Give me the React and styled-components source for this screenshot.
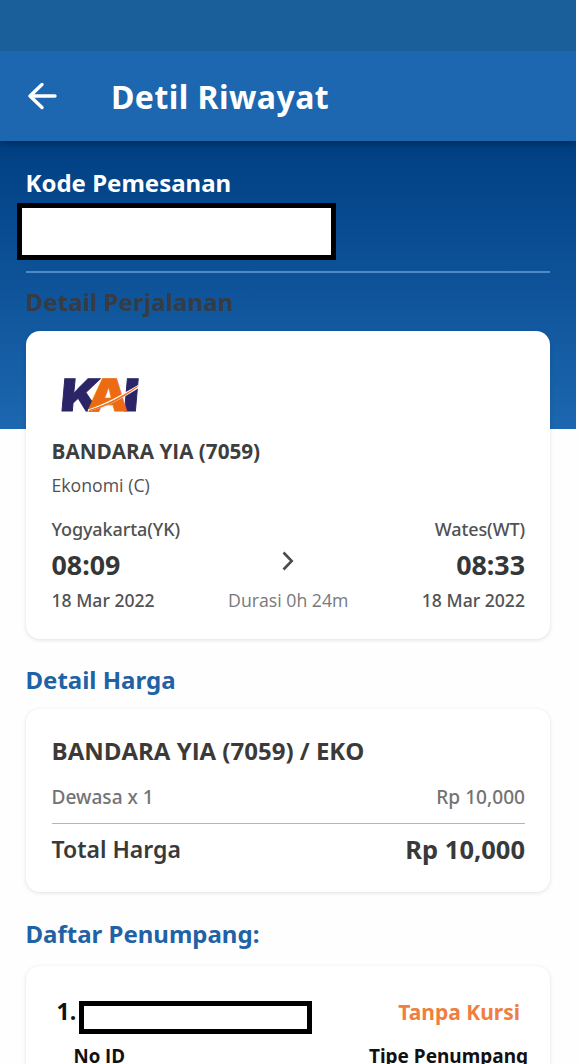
import React from 'react';
import styled, { createGlobalStyle } from 'styled-components';

const GlobalStyle = createGlobalStyle`
  * {
    box-sizing: border-box;
  }
  body {
    margin: 0;
    background: #fefefe;
    font-family: 'Noto Sans', sans-serif;
    overflow: hidden;
  }
`;

const Screen = styled.div`
  width: 576px;
  height: 1064px;
  overflow: hidden;
`;

const StatusBar = styled.div`
  height: 51px;
  background: #1a5e9a;
`;

const Header = styled.header`
  display: flex;
  align-items: center;
  position: relative;
  height: 90px;
  padding: 1px 27px 0;
  gap: 53px;
  background: #1c67b0;
  box-shadow: 0 2px 8px rgba(0, 0, 0, 0.35);
  clip-path: inset(0 0 -12px 0);
  svg {
    display: block;
    margin-bottom: 2px;
  }
`;

const Content = styled.main`
  padding: 24px 26px 0 25.5px;
  background: linear-gradient(#003f82, #1c67b0) no-repeat;
  background-size: 100% 288px;
`;

const Text = styled.div`
  font-family: ${({ plain }) => plain ? "'Open Sans', sans-serif" : 'inherit'};
  font-size: ${({ size }) => size || 18}px;
  font-weight: ${({ weight }) => weight || 500};
  line-height: ${({ line }) => line || 26}px;
  letter-spacing: ${({ spacing }) => spacing || 0}px;
  color: ${({ color }) => color || '#505254'};
  white-space: nowrap;
`;

const Title = styled.h1`
  margin: 0;
  font-size: 32px;
  font-weight: 700;
  line-height: 44px;
  letter-spacing: 0.45px;
  color: #fff;
`;

const Duration = styled(Text)`
  grid-row: 3;
  grid-column: 2;
`;

const SectionTitle = styled.h2`
  margin: ${({ top }) => top || 24}px 0 ${({ bottom }) => bottom || 11}px;
  font-size: 24px;
  font-weight: 700;
  line-height: 36px;
  letter-spacing: ${({ spacing }) => spacing || 0}px;
  color: ${({ color }) => color || '#1f62a5'};
`;

const CodeBox = styled.div`
  width: 319px;
  height: 57px;
  margin: 2px 0 11px -8.5px;
  border: 5px solid #000;
  background: #fff;
`;

const Divider = styled.div`
  height: 2px;
  background: #5089c6;
`;

const Card = styled.section`
  padding: ${({ pad }) => pad};
  border-radius: 14px;
  background: #fff;
  box-shadow: 0 1px 4px rgba(0, 0, 0, 0.12);
`;

const Logo = styled.svg`
  display: block;
  margin: -15px 0 12px -1px;
`;

const Trip = styled.div`
  display: grid;
  grid-template-columns: 1fr auto 1fr;
  grid-template-rows: 26px 36px 25px;
  row-gap: 5px;
  margin-top: 11px;
`;

const Stop = styled.div`
  display: grid;
  grid-row: 1 / 4;
  grid-template-rows: subgrid;
  justify-items: ${({ align }) => align || 'start'};
`;

const Arrow = styled.div`
  grid-row: 2;
  justify-self: center;
  padding-top: 4px;
  svg {
    display: block;
  }
`;

const Row = styled.div`
  display: flex;
  justify-content: space-between;
  align-items: center;
`;

const PriceRow = styled(Row)`
  padding: 15px 0 13px;
  border-bottom: 1px solid #b5b5b5;
`;

const TotalRow = styled(Row)`
  margin-top: 7px;
`;

const Passenger = styled.div`
  display: flex;
  align-items: flex-start;
  gap: 3px;
`;

const NameBox = styled.div`
  width: 233px;
  height: 33px;
  margin-top: 8px;
  border: 5px solid #000;
  background: #fff;
`;

const PassengerTop = styled(Row)`
  align-items: flex-start;
  padding: 0 5px;
`;

const PassengerInfo = styled(Row)`
  padding: 0 0 0 22px;
  margin: 9px -3px 0 0;
`;

const BackIcon = () => (
  <svg width="31" height="30" viewBox="0 0 31 30" fill="none" stroke="#fff" strokeWidth="3.4" strokeLinecap="round" strokeLinejoin="round">
    <path d="M28 15H4M15 3.5L3 15L15 26.5" />
  </svg>
);

const ChevronIcon = () => (
  <svg width="14" height="20" viewBox="0 0 14 20" fill="none" stroke="#4a4b4d" strokeWidth="2.6">
    <path d="M2.5 1.5L10.7 10L2.5 18.5" />
  </svg>
);

const KaiLogo = () => (
  <Logo width="110" height="62" viewBox="-10 -15 110 62">
    <g fontFamily="Inter, sans-serif" fontWeight="900" fontSize="44.5" strokeWidth="0.8" transform="translate(1 33) skewX(-5)">
      <text x="-2.5" y="0" fill="#2b2467" stroke="#2b2467" textLength="40" lengthAdjust="spacingAndGlyphs">K</text>
      <text x="60" y="0" fill="#2b2467" stroke="#2b2467" textLength="16" lengthAdjust="spacingAndGlyphs">I</text>
      <text x="24.5" y="0" fill="#ec6b12" stroke="#ec6b12" textLength="41" lengthAdjust="spacingAndGlyphs">A</text>
    </g>
    <path d="M27 31.5C44 26 60 17 77 7L77 10.5C62 20 46 29 27 33.5Z" fill="#fff" />
    <path d="M28 32.5C46 27 61 18.5 76.5 8.5C62 19.5 47 28.5 28 32.5Z" fill="#ec6b12" stroke="#ec6b12" strokeWidth="0.8" />
  </Logo>
);

const App = () => {
  return (
    <>
      <GlobalStyle />
      <Screen>
        <StatusBar />
        <Header>
          <BackIcon />
          <Title>Detil Riwayat</Title>
        </Header>
        <Content>
          <Text size={24} weight={700} line={36} color="#fff">Kode Pemesanan</Text>
          <CodeBox />
          <Divider />
          <SectionTitle top={11} spacing={0.12} color="#353c45">Detail Perjalanan</SectionTitle>

          <Card pad="47px 25px 26px 26px">
            <KaiLogo />
            <Text plain size={20.7} weight={700} line={28} color="#3c3e40">BANDARA YIA (7059)</Text>
            <Text plain size={17.7} weight={400} line={40}>Ekonomi (C)</Text>
            <Trip>
              <Stop>
                <Text spacing={-0.1}>Yogyakarta(YK)</Text>
                <Text size={26.8} weight={700} line={36} color="#343638">08:09</Text>
                <Text size={17.6} line={24}>18 Mar 2022</Text>
              </Stop>
              <Arrow>
                <ChevronIcon />
              </Arrow>
              <Duration plain size={17.7} weight={400} line={24} color="#77797b">Durasi 0h 24m</Duration>
              <Stop align="end">
                <Text spacing={-0.1}>Wates(WT)</Text>
                <Text size={26.8} weight={700} line={36} color="#343638">08:33</Text>
                <Text size={17.6} line={24}>18 Mar 2022</Text>
              </Stop>
            </Trip>
          </Card>

          <SectionTitle top={23}>Detail Harga</SectionTitle>
          <Card pad="24px 25px 25px 26px">
            <Text plain size={24} weight={700} line={36} color="#3c3a38">BANDARA YIA (7059) / EKO</Text>
            <PriceRow>
              <Text size={19.1} color="#737373">Dewasa x 1</Text>
              <Text size={19.1} color="#737373">Rp 10,000</Text>
            </PriceRow>
            <TotalRow>
              <Text size={23} weight={600} line={35} color="#38393b">Total Harga</Text>
              <Text size={25.5} weight={700} line={36} color="#38393b">Rp 10,000</Text>
            </TotalRow>
          </Card>

          <SectionTitle bottom={14}>Daftar Penumpang:</SectionTitle>
          <Card pad="27px 25px 60px 26px">
            <PassengerTop>
              <Passenger>
                <Text plain size={23} weight={700} line={36} color="#111">1.</Text>
                <NameBox />
              </Passenger>
              <Text size={21} weight={700} line={38} color="#ee7f3f">Tanpa Kursi</Text>
            </PassengerTop>
            <PassengerInfo>
              <Text plain size={18.7} weight={700} color="#111">No ID</Text>
              <Text size={19} weight={700} color="#111">Tipe Penumpang</Text>
            </PassengerInfo>
          </Card>
        </Content>
      </Screen>
    </>
  );
};

export default App;
